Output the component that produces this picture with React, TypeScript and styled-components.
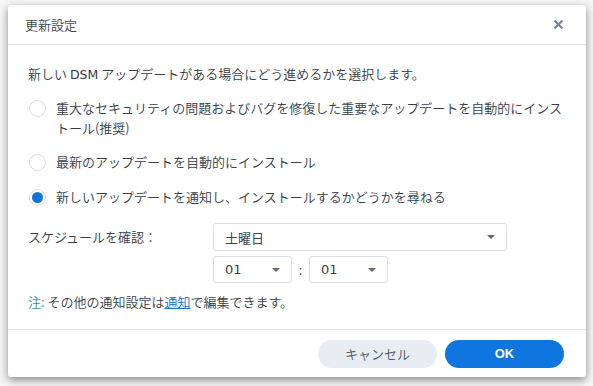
import React from "react";
import styled, { createGlobalStyle } from "styled-components";

const Global = createGlobalStyle`
  html, body { margin: 0; padding: 0; background: #ffffff; }
  body {
    font-family: "DejaVu Sans", "Noto Sans CJK JP", sans-serif;
    -webkit-font-smoothing: antialiased;
  }
`;

const Page = styled.div`
  width: 593px;
  height: 386px;
  box-sizing: border-box;
  padding: 5px 7px 9px 8px;
  background: #f6f6f6;
`;

const Dialog = styled.div`
  width: 578px;
  height: 372px;
  background: #fff;
  border-radius: 3px;
  box-shadow: 0 3px 9px rgba(0, 0, 0, 0.45);
  display: flex;
  flex-direction: column;
  color: #353c44;
  font-family: "Noto Sans CJK JP", sans-serif;
  font-weight: 350;
  font-size: 13px;
`;

const Header = styled.div`
  height: 39px;
  flex: none;
  border-bottom: 1px solid #e3e6ea;
  display: flex;
  align-items: center;
  justify-content: space-between;
  padding: 0 21px 0 17px;
`;

const Title = styled.div`
  font-size: 13px;
  color: #3a424a;
`;

const Close = styled.button`
  border: none;
  background: none;
  padding: 0;
  width: 14px;
  height: 14px;
  display: flex;
  align-items: center;
  justify-content: center;
  cursor: pointer;
`;

const Body = styled.div`
  flex: 1;
  padding: 19px 20px 0 20px;
  display: flex;
  flex-direction: column;
`;

const Intro = styled.div`
  height: 20px;
  line-height: 20px;
  font-size: 13px;
`;

const Latin = styled.span`
  font-family: "DejaVu Sans", sans-serif;
  font-weight: 400;
  font-size: 12.5px;
  line-height: 1;
`;

const RadioRow = styled.label<{ $gap: number }>`
  display: flex;
  align-items: flex-start;
  margin-top: ${(p) => p.$gap}px;
  line-height: 20px;
  cursor: pointer;
`;

const RadioCircle = styled.span<{ $checked?: boolean }>`
  flex: none;
  box-sizing: border-box;
  width: 17px;
  height: 17px;
  border-radius: 50%;
  border: 1px solid #d7dde3;
  background: #fff;
  margin: 2px 10px 0 1px;
  display: flex;
  align-items: center;
  justify-content: center;
  &::after {
    content: "";
    display: ${(p) => (p.$checked ? "block" : "none")};
    width: 11px;
    height: 11px;
    border-radius: 50%;
    background: #1173dc;
  }
`;

const RadioText = styled.span`
  font-size: 13px;
`;

const ScheduleRow = styled.div`
  display: grid;
  grid-template-columns: 185px auto;
  margin-top: 16px;
`;

const Label = styled.div`
  height: 28px;
  line-height: 28px;
`;

const Fields = styled.div`
  display: flex;
  flex-direction: column;
  gap: 5px;
`;

const SelectBox = styled.div<{ $w: number; $h: number }>`
  box-sizing: border-box;
  width: ${(p) => p.$w}px;
  height: ${(p) => p.$h}px;
  border: 1px solid #d8dee4;
  border-radius: 3px;
  display: flex;
  align-items: center;
  justify-content: space-between;
  padding: 0 11px 0 11px;
  font-family: "DejaVu Sans", "Noto Sans CJK JP", sans-serif;
  font-weight: 400;
  font-size: 13px;
  color: #3a424a;
`;

const Caret = styled.span`
  width: 0;
  height: 0;
  border-left: 4px solid transparent;
  border-right: 4px solid transparent;
  border-top: 4px solid #606a74;
`;

const TimeRow = styled.div`
  display: flex;
  align-items: center;
`;

const Colon = styled.span`
  width: 17px;
  text-align: center;
  color: #555f69;
`;

const Note = styled.div`
  margin-top: 9px;
  line-height: 20px;
`;

const NoteTag = styled.span`
  color: #2f8ea3;
`;

const Link = styled.a`
  color: #0c6fd0;
  text-decoration: underline;
`;

const Footer = styled.div`
  height: 47px;
  flex: none;
  border-top: 1px solid #e3e6ea;
  display: flex;
  align-items: center;
  justify-content: flex-end;
  gap: 8px;
  padding: 0 22px 0 0;
`;

const Button = styled.button<{ $primary?: boolean }>`
  width: 119px;
  height: 28px;
  border: none;
  border-radius: 14px;
  font-family: "Liberation Sans", "Noto Sans CJK JP", sans-serif;
  font-size: 13px;
  font-weight: ${(p) => (p.$primary ? 700 : 350)};
  background: ${(p) => (p.$primary ? "#0f76e0" : "#e8edf3")};
  color: ${(p) => (p.$primary ? "#fff" : "#4c5660")};
  cursor: pointer;
`;

function Select({ value, w, h }: { value: string; w: number; h: number }) {
  return (
    <SelectBox $w={w} $h={h}>
      <span>{value}</span>
      <Caret />
    </SelectBox>
  );
}

export default function App() {
  return (
    <>
      <Global />
      <Page>
        <Dialog>
          <Header>
            <Title>更新設定</Title>
            <Close aria-label="close">
              <svg width="11" height="11" viewBox="0 0 11 11">
                <path d="M1.5 1.5 L9.5 9.5 M9.5 1.5 L1.5 9.5" stroke="#7d868f" strokeWidth="2.2" strokeLinecap="butt" />
              </svg>
            </Close>
          </Header>
          <Body>
            <Intro>
              新しい <Latin>DSM</Latin> アップデートがある場合にどう進めるかを選択します。
            </Intro>
            <RadioRow $gap={14}>
              <RadioCircle />
              <RadioText>
                重大なセキュリティの問題およびバグを修復した重要なアップデートを自動的にインストール(推奨)
              </RadioText>
            </RadioRow>
            <RadioRow $gap={14}>
              <RadioCircle />
              <RadioText>最新のアップデートを自動的にインストール</RadioText>
            </RadioRow>
            <RadioRow $gap={15}>
              <RadioCircle $checked />
              <RadioText>新しいアップデートを通知し、インストールするかどうかを尋ねる</RadioText>
            </RadioRow>
            <ScheduleRow>
              <Label>スケジュールを確認：</Label>
              <Fields>
                <Select value="土曜日" w={294} h={28} />
                <TimeRow>
                  <Select value="01" w={79} h={27} />
                  <Colon>:</Colon>
                  <Select value="01" w={79} h={27} />
                </TimeRow>
              </Fields>
            </ScheduleRow>
            <Note>
              <NoteTag>注:</NoteTag> その他の通知設定は<Link href="#">通知</Link>で編集できます。
            </Note>
          </Body>
          <Footer>
            <Button>キャンセル</Button>
            <Button $primary>OK</Button>
          </Footer>
        </Dialog>
      </Page>
    </>
  );
}
